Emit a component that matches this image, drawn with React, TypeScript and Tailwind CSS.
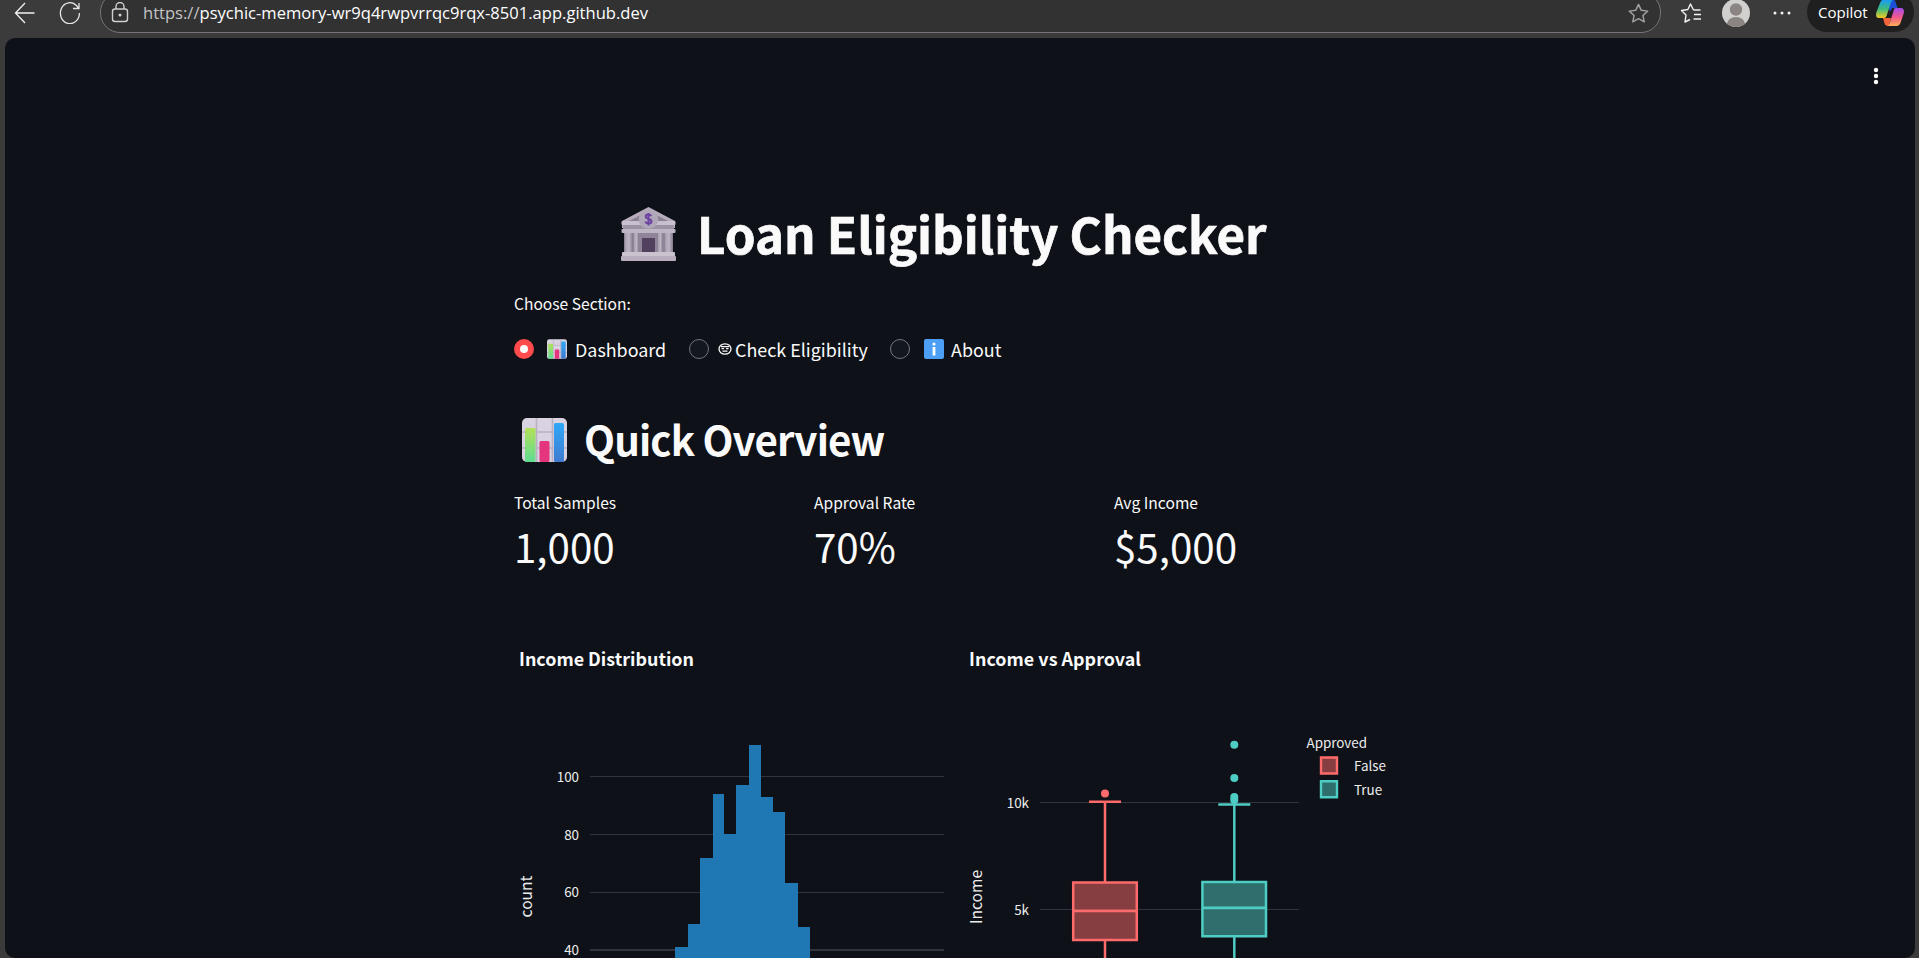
import React from "react";

const bars = [
  [675, 947, 13], [688, 924, 12], [700, 858, 13], [713, 794, 11], [724, 834, 12], [736, 785, 13],
  [749, 745, 12], [761, 797, 12], [773, 812, 12], [785, 883, 13], [798, 927, 12],
];

const ChartEmoji = ({ className }: { className: string }) => (
  <svg className={className} viewBox="0 0 45 44">
    <defs>
      <linearGradient id="cg" x1="0" y1="0" x2="0" y2="1"><stop offset="0" stopColor="#b2e058" /><stop offset="1" stopColor="#5fdc92" /></linearGradient>
      <linearGradient id="cb" x1="0" y1="0" x2="0" y2="1"><stop offset="0" stopColor="#2fa8f8" /><stop offset="1" stopColor="#407bcf" /></linearGradient>
    </defs>
    <rect width="45" height="44" rx="5" fill="#d9d2e0" />
    <path d="M14.5 0v44M30.5 0v44M0 14h45M0 30h45" stroke="#b9b1c3" strokeWidth="1.6" />
    <rect x="3" y="10" width="10.5" height="34" rx="1.5" fill="url(#cg)" />
    <rect x="17.5" y="23" width="10" height="21" rx="1.5" fill="#e5357c" />
    <rect x="32" y="5" width="10" height="39" rx="1.5" fill="url(#cb)" />
  </svg>
);

const Bank = () => (
  <svg className="h-[54px] w-[55px] shrink-0" viewBox="0 0 55 54">
    <defs>
      <linearGradient id="pl" x1="0" y1="0" x2="1" y2="0"><stop offset="0" stopColor="#a79dac" /><stop offset=".5" stopColor="#bfb6c5" /><stop offset="1" stopColor="#82788a" /></linearGradient>
    </defs>
    <path d="M3 21h49v25H3z" fill="#8f8498" />
    <path d="M27.500 0L1 14v7h53v-7z" fill="#b7adbc" />
    <path d="M27.500 4L8 14h39z" fill="#8b8193" />
    <rect x="0.500" y="14" width="54" height="4" rx="1" fill="#c8c0ce" />
    <path d="M2 18h51v4H2z" fill="#9d93a4" />
    <rect x="0.500" y="22" width="54" height="4" rx="1" fill="#bfb6c5" />
    <circle cx="27.500" cy="12" r="9.800" fill="#b0a7b8" />
    <path d="M30.300 9.200c-.6-1.300-1.600-1.700-2.900-1.700-1.600 0-2.700.8-2.700 2.100 0 3 5.800 1.700 5.800 4.700 0 1.400-1.200 2.200-2.900 2.200-1.500 0-2.700-.6-3.200-2M27.500 6v12.500" fill="none" stroke="#6c43a0" strokeWidth="2" />
    <rect x="4" y="26" width="8" height="20" fill="url(#pl)" /><rect x="13" y="26" width="5" height="20" fill="url(#pl)" />
    <rect x="37" y="26" width="5" height="20" fill="url(#pl)" /><rect x="44" y="26" width="8" height="20" fill="url(#pl)" />
    <rect x="21" y="31" width="13" height="15" fill="#51405e" />
    <rect x="1" y="45" width="53" height="5" rx="1" fill="#cbc2d0" /><rect x="0" y="49" width="55" height="5" rx="1" fill="#b8aebe" />
  </svg>
);

const Star = ({ className }: { className: string }) => (
  <svg className={className} viewBox="0 0 24 24" fill="none" stroke="currentColor" strokeWidth="1.500" strokeLinejoin="round">
    <path d="M12 2.500l2.900 6.200 6.700.8-5 4.600 1.400 6.700-6-3.400-6 3.400 1.400-6.700-5-4.600 6.700-.8z" />
  </svg>
);

const Radio = ({ on }: { on?: boolean }) => on ? (
  <span className="flex size-5 items-center justify-center rounded-full bg-[#ff4b4b]"><span className="size-2 rounded-full bg-[#fafafa]" /></span>
) : (
  <span className="size-5 rounded-full border border-[#74767c] bg-[#131720]" />
);

const Metric = ({ label, value }: { label: string; value: string }) => (
  <div className="w-[300px] shrink-0">
    <div className="h-[25px] text-[15.6px] leading-[25px]">{label}</div>
    <div className="mt-[3px] h-[56px] text-[40.300px] leading-[56px]">{value}</div>
  </div>
);

export default function App() {
  return (
    <div className="flex h-[958px] w-[1919px] flex-col overflow-hidden bg-[#3b3b3b] font-['Noto_Sans_CJK_SC',sans-serif] text-[#fafafa]">
      <header className="flex h-[38px] shrink-0 items-start">
        <svg className="mt-[2px] ml-[14px] size-[22px]" viewBox="0 0 22 22" fill="none" stroke="#f2f2f2" strokeWidth="1.300"><path d="M20.500 11H1.500M11 1L1.500 11l9.500 10" /></svg>
        <svg className="mt-[2px] ml-[23px] size-[22px]" viewBox="0 0 22 22" fill="none" stroke="#e6e6e6" strokeWidth="1.300"><path d="M20.400 11a9.500 10.500 0 1 1-3-7.500l2.400 2.800M20 1v5.500h-6" /></svg>
        <div className="-mt-[8px] ml-[19px] flex h-[41px] w-[1561px] items-center rounded-[20px] border border-[#757575] bg-[#323232]">
          <svg className="ml-[8px] size-[22px]" viewBox="0 0 22 22" fill="none" stroke="#d0d0d0" strokeWidth="1.400"><rect x="3.500" y="7" width="15" height="12.500" rx="2.500" /><path d="M7 7V4.500a4 4 0 0 1 8 0V7" /><circle cx="11" cy="13" r=".8" fill="#d0d0d0" /></svg>
          <span className="mt-[2px] ml-[12px] font-['Open_Sans',sans-serif] text-[16.570px] whitespace-nowrap text-white"><span className="text-[#c4c4c4]">https://</span>psychic-memory-wr9q4rwpvrrqc9rqx-8501.app.github.dev</span>
          <Star className="mt-[2px] mr-[10px] ml-auto size-[23px] text-[#a0a0a0]" />
        </div>
        <svg className="mt-[2px] ml-[19px] h-[22px] w-[23px] text-[#f2f2f2]" viewBox="0 0 23 22" fill="none" stroke="currentColor" strokeWidth="1.400" strokeLinejoin="round"><path d="M13.500 8L10.500 2 7.800 7.500 1.500 8.500 6 13l-1 7 5-2.500M13.500 8h7M14 12.500h7M13.500 17h7.500" /></svg>
        <svg className="-mt-[1px] ml-[19px] size-[28px]" viewBox="0 0 28 28"><defs><clipPath id="av"><circle cx="14" cy="14" r="14" /></clipPath></defs><g clipPath="url(#av)"><path fill="#d2d0ce" d="M0 0h28v28H0z" /><circle cx="14" cy="10.500" r="6.200" fill="#8a8582" /><ellipse cx="14" cy="25" rx="9" ry="7" fill="#8a8582" /></g></svg>
        <svg className="mt-[9px] ml-[23px] h-[8px] w-[18px]" viewBox="0 0 18 8" fill="#f2f2f2"><circle cx="2" cy="4" r="1.500" /><circle cx="9" cy="4" r="1.500" /><circle cx="16" cy="4" r="1.500" /></svg>
        <div className="-mt-[8px] ml-[16px] flex h-[40px] w-[107px] shrink-0 items-center rounded-[20px] bg-[#1f1f1f] pl-[11px]">
          <span className="font-['Open_Sans',sans-serif] text-[15px] text-white">Copilot</span>
          <svg className="mt-[2px] ml-[8px] h-[26px] w-[28px] shrink-0" viewBox="0 0 28 26">
            <defs>
              <linearGradient id="k1" x1="0" y1="0" x2="0" y2="1"><stop offset="0" stopColor="#199bf5" /><stop offset=".5" stopColor="#3dbd7a" /><stop offset="1" stopColor="#f5cc22" /></linearGradient>
              <linearGradient id="k2" x1="0" y1="0" x2="0" y2="1"><stop offset="0" stopColor="#a34ef0" /><stop offset=".5" stopColor="#f0568c" /><stop offset="1" stopColor="#ffad55" /></linearGradient>
            </defs>
            <path d="M12 0h5c2.500 0 2.500 2 3.500 5l1 3h-5l-3 4z" fill="#1d50d8" /><path d="M7 18h8l-2 8h-1c-3.500 0-3.500-3-5-8z" fill="#f4633c" />
            <path d="M7 0h10c-2 1-2.500 4-3.500 7l-3 9c-.7 2-2 2-4 2H3c-3 0-3.500-3-2.500-6L4 3C5 1 5 0 7 0z" fill="url(#k1)" />
            <path d="M20 8h5c3 0 3.500 3 2.500 6l-3 9c-1 2-2 3-4 3h-9c2-1 2.500-4 3.500-7l2.500-8c.6-2 .5-3 2.500-3z" fill="url(#k2)" />
          </svg>
        </div>
      </header>
      <main className="mx-[5px] flex h-[920px] w-[1910px] flex-col overflow-hidden rounded-[10px] bg-[#0e1117]">
        <div className="flex h-[158px] shrink-0 justify-end pt-[29px] pr-[36px]">
          <svg className="h-[18px] w-[6px]" viewBox="0 0 6 18" fill="#fafafa"><circle cx="3" cy="3" r="2.200" /><circle cx="3" cy="9" r="2.200" /><circle cx="3" cy="15" r="2.200" /></svg>
        </div>
        <div className="ml-[509px] flex w-[900px] flex-col">
          <h1 className="flex h-[76px] items-center pl-[107px]">
            <Bank />
            <span className="-mt-[2px] ml-[21px] text-[49.300px] leading-[76px] font-bold whitespace-nowrap [-webkit-text-stroke:0.700px_#fafafa]">Loan Eligibility Checker</span>
          </h1>
          <div className="mt-[18px] h-[26px] text-[15.600px] leading-[26px]">Choose Section:</div>
          <div className="mt-[18px] flex h-[30px] items-center text-[17.900px] leading-[30px] whitespace-nowrap">
            <Radio on /><ChartEmoji className="ml-[13px] size-5" /><span className="-mt-px ml-[8px] w-[114px]">Dashboard</span>
            <Radio />
            <svg className="ml-[9px] h-[12px] w-[14px]" viewBox="0 0 14 12" fill="none" stroke="#fafafa" strokeWidth="1.300"><ellipse cx="7" cy="6" rx="6" ry="5.200" /><path d="M3 3.600h8M3.500 5.600h2.500M8 5.600h2.500M4.500 8.200h5" /></svg>
            <span className="-mt-px ml-[3px] w-[155px]">Check Eligibility</span>
            <Radio />
            <svg className="ml-[14px] size-5 shrink-0" viewBox="0 0 20 20"><rect width="20" height="20" rx="2" fill="#4c9ff5" /><circle cx="10" cy="5" r="1.600" fill="#fff" /><path d="M8.600 8h2.800v8.500H8.600z" fill="#fff" /></svg>
            <span className="-mt-px ml-[7px]">About</span>
          </div>
          <h2 className="mt-[46px] flex h-[60px] items-center pl-[8px]">
            <ChartEmoji className="h-[44px] w-[45px] shrink-0" />
            <span className="-mt-[2px] ml-[17px] text-[40.300px] leading-[60px] font-semibold tracking-[-0.880px] whitespace-nowrap">Quick Overview</span>
          </h2>
          <div className="mt-[20px] flex">
            <Metric label="Total Samples" value="1,000" /><Metric label="Approval Rate" value="70%" /><Metric label="Avg Income" value="$5,000" />
          </div>
        </div>
        <div className="mt-auto ml-[509px] flex h-[328px] shrink-0">
          <svg className="h-[328px] w-[450px]" viewBox="514 630 450 328" fill="#eceded">
            <text x="519" y="666" fontSize="17.900" fontWeight="700" fill="#fafafa" textLength="175">Income Distribution</text>
            <g fill="#31333f"><path d="M590 776h354v1H590zM590 834h354v1H590zM590 892h354v1H590zM590 949h354v2H590z" /></g>
            {bars.map(([x, y, w]) => <rect key={x} x={x} y={y} width={w} height={958 - y} fill="#1f77b4" shapeRendering="crispEdges" />)}
            <g fontSize="13.400" textAnchor="end"><text x="579" y="782">100</text><text x="579" y="840">80</text><text x="579" y="897">60</text><text x="579" y="955">40</text></g>
            <text transform="translate(532 896.500) rotate(-90)" textAnchor="middle" fontSize="15.600">count</text>
          </svg>
          <svg className="h-[328px] w-[450px]" viewBox="964 630 450 328" fill="#eceded">
            <text x="969" y="666" fontSize="17.900" fontWeight="700" fill="#fafafa" textLength="172">Income vs Approval</text>
            <path d="M1040 802h259v1h-259zM1040 909h259v1h-259z" fill="#31333f" />
            <g fontSize="13.400"><text x="1029" y="808" textAnchor="end">10k</text><text x="1029" y="915" textAnchor="end">5k</text><text x="1306.500" y="748">Approved</text><text x="1354" y="771">False</text><text x="1354" y="795">True</text></g>
            <text transform="translate(982 897) rotate(-90)" textAnchor="middle" fontSize="15.600">Income</text>
            <g stroke="#ff6b6b" strokeWidth="2.500"><path d="M1105 801.700V882M1105 941V958M1089 801.700h32" /><path d="M1073.200 882.500h63.600v57.500h-63.600z" fill="#ff6b6b" fillOpacity=".5" /><path d="M1073 911h64" /></g><circle cx="1105" cy="793.500" r="4" fill="#ff6b6b" />
            <g stroke="#4ecdc4" strokeWidth="2.500"><path d="M1234.300 804.500V882M1234.300 937V958M1218.300 804.500h32" /><path d="M1202.400 882h63.600v54.300h-63.600z" fill="#4ecdc4" fillOpacity=".5" /><path d="M1202 907.800h64" /></g>
            <g fill="#4ecdc4"><circle cx="1234.300" cy="744.800" r="4" /><circle cx="1234.300" cy="778" r="4" /><circle cx="1234.300" cy="797" r="4" /><circle cx="1234.300" cy="800" r="4" /></g>
            <path d="M1321 757.500h16v16h-16z" fill="#ff6b6b" fillOpacity=".5" stroke="#ff6b6b" strokeWidth="2.400" /><path d="M1321 781.300h16v16h-16z" fill="#4ecdc4" fillOpacity=".5" stroke="#4ecdc4" strokeWidth="2.400" />
          </svg>
        </div>
      </main>
    </div>
  );
}
